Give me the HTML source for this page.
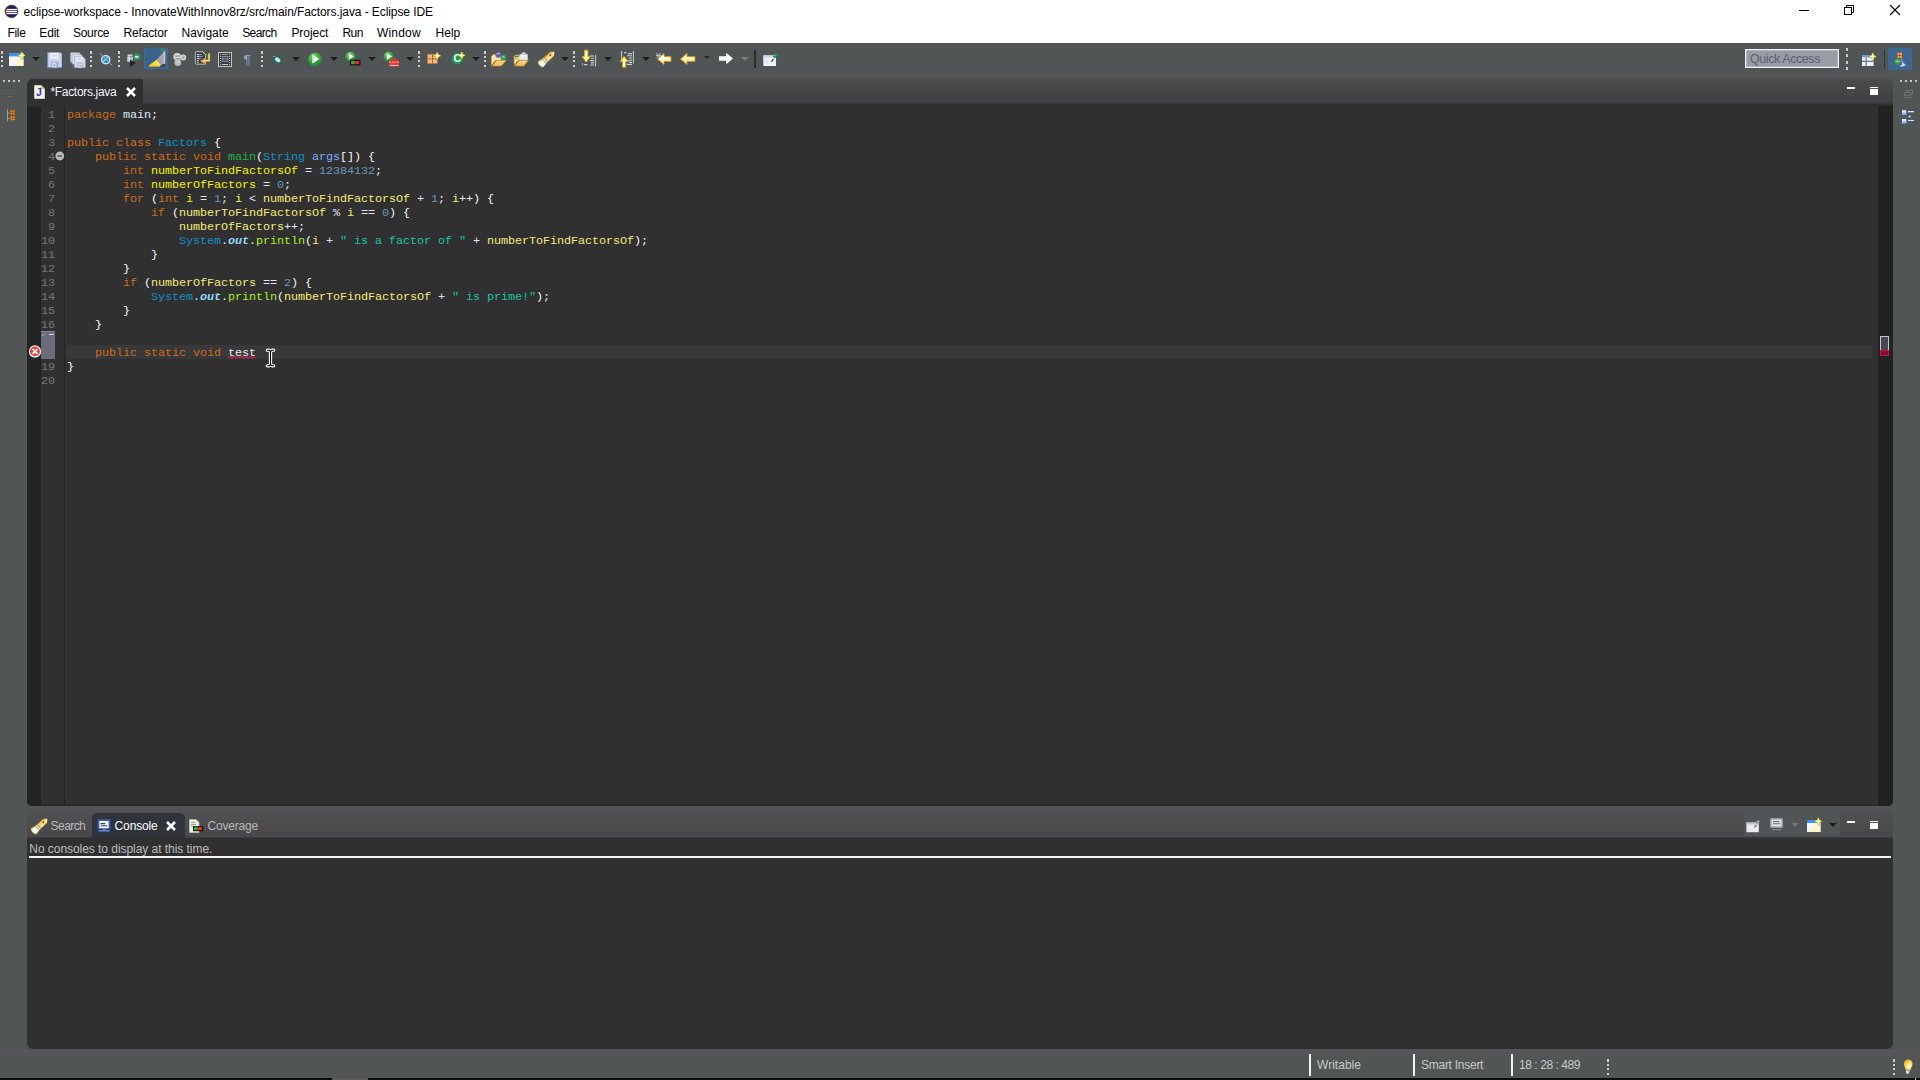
<!DOCTYPE html>
<html lang="en"><head><meta charset="utf-8"><title>eclipse-workspace - InnovateWithInnov8rz/src/main/Factors.java - Eclipse IDE</title>
<style>
html,body{margin:0;padding:0;width:1920px;height:1080px;overflow:hidden;background:#515655;font-family:"Liberation Sans",sans-serif;font-size:12px;color:#000}
div,span,svg{position:absolute;box-sizing:border-box}
.t{white-space:pre;line-height:16px;height:16px}
svg{overflow:visible}
#titlebar{left:0;top:0;width:1920px;height:43px;background:#fff}
#toolbar{left:0;top:43px;width:1920px;height:34px;background:linear-gradient(#4a4c4d 0,#555657 2px,#515556 6px,#4f5556 26px,#555557 33px,#555557 34px)}
.dd{width:0;height:0;border-left:4px solid transparent;border-right:4px solid transparent;border-top:4.5px solid #1c1c1c;margin-left:-0.5px}
.dots{width:2px;height:17px;background:linear-gradient(#cfcfcf 0,#cfcfcf 3px,transparent 3px,transparent 5px,#cfcfcf 5px,#cfcfcf 7px,transparent 7px,transparent 9.5px,#cfcfcf 9.5px,#cfcfcf 11.5px,transparent 11.5px,transparent 14px,#cfcfcf 14px,#cfcfcf 16.5px,transparent 16.5px)}
.code{font-family:"Liberation Mono",monospace;font-size:11.8px;letter-spacing:-0.08px;white-space:pre;line-height:14px;height:14px;color:#d9e8f7}
.code span{position:static}
.k{color:#cc6c1d}.c{color:#1290c3}.md{color:#1eb540}.p{color:#79abff}.vd{color:#f2f200}.v{color:#f3ec79}
.n{color:#6897bb}.s{color:#17c6a3}.sf{color:#8ddaf8;font-style:italic;font-weight:bold}.m{color:#a7ec21}.o{color:#e6e6fa}.b{color:#f9faf4}
.ln{font-family:"Liberation Mono",monospace;font-size:11.8px;letter-spacing:-0.08px;line-height:14px;height:14px;color:#767676;text-align:right;width:16px;left:39px;white-space:pre}
.u{color:#e8eef5}

</style></head><body>
<div id="titlebar">
<svg style="left:3px;top:4px" width="16" height="15" viewBox="3 4 16 15"><circle cx="10.6" cy="11.2" r="6.3" fill="#f5a13a"/><circle cx="11.7" cy="11.4" r="6.2" fill="#2a1f5c"/><rect x="6.4" y="8.9" width="10.7" height="1.3" fill="#fff"/><rect x="5.9" y="10.9" width="11.6" height="1.3" fill="#fff"/><rect x="6.4" y="12.95" width="10.7" height="1.2" fill="#fff"/><circle cx="11.7" cy="11.4" r="6.2" fill="none" stroke="#1a1436" stroke-width=".6"/></svg>
<span class="t" style="letter-spacing:-0.079px;left:23.5px;top:3.5px">eclipse-workspace - InnovateWithInnov8rz/src/main/Factors.java - Eclipse IDE</span>
<svg style="left:1799px;top:10px" width="10" height="1"><rect width="10" height="1" fill="#000"/></svg>
<svg style="left:1844px;top:5px" width="10" height="10" viewBox="0 0 10 10" fill="none" stroke="#000" stroke-width="1"><rect x="0.5" y="2.5" width="7" height="7"/><path d="M2.5 2.5V0.5H9.5V7.5H7.5"/></svg>
<svg style="left:1890px;top:5px" width="10" height="10" viewBox="0 0 10 10" stroke="#000" stroke-width="1.1"><path d="M0 0L10 10M10 0L0 10"/></svg>
<span class="t" style="letter-spacing:-0.336px;left:7.5px;top:24.5px">File</span>
<span class="t" style="letter-spacing:-0.172px;left:39.3px;top:24.5px">Edit</span>
<span class="t" style="letter-spacing:-0.305px;left:73px;top:24.5px">Source</span>
<span class="t" style="letter-spacing:-0.17px;left:123.5px;top:24.5px">Refactor</span>
<span class="t" style="letter-spacing:-0.047px;left:181.6px;top:24.5px">Navigate</span>
<span class="t" style="letter-spacing:-0.605px;left:242.2px;top:24.5px">Search</span>
<span class="t" style="letter-spacing:-0.051px;left:291.4px;top:24.5px">Project</span>
<span class="t" style="letter-spacing:-0.539px;left:342.4px;top:24.5px">Run</span>
<span class="t" style="letter-spacing:0.185px;left:377px;top:24.5px">Window</span>
<span class="t" style="letter-spacing:-0.022px;left:435.6px;top:24.5px">Help</span>
</div>

<div id="toolbar"></div>
<!-- toolbar separators (dots) -->
<div class="dots" style="left:1px;top:51px"></div>
<div class="dots" style="left:90px;top:51px"></div>
<div class="dots" style="left:118px;top:51px"></div>
<div class="dots" style="left:261px;top:51px"></div>
<div class="dots" style="left:418px;top:51px"></div>
<div class="dots" style="left:484px;top:51px"></div>
<div class="dots" style="left:573px;top:51px"></div>
<!-- dropdown arrows -->
<div class="dd" style="left:32px;top:57px"></div>
<div class="dd" style="left:292px;top:57px"></div>
<div class="dd" style="left:330px;top:57px"></div>
<div class="dd" style="left:368px;top:57px"></div>
<div class="dd" style="left:406px;top:57px"></div>
<div class="dd" style="left:472px;top:57px"></div>
<div class="dd" style="left:561px;top:57px"></div>
<div class="dd" style="left:604px;top:57px"></div>
<div class="dd" style="left:642px;top:57px"></div>
<div class="dd" style="left:704.2px;top:56.4px;border-left-width:3.3px;border-right-width:3.3px;border-top-width:3.7px;border-top-color:#262828"></div>
<div class="dd" style="left:741px;top:57px;border-top-color:#7a7c7d"></div>
<div style="left:754px;top:50px;width:2px;height:18px;background:#2b2c2d"></div>

<!-- 1 New -->
<svg style="left:8px;top:51px" width="18" height="16" viewBox="0 0 18 16">
<rect x="1" y="2" width="14.5" height="13" fill="#f4f6fb"/><rect x="1" y="2" width="12" height="3.4" fill="#3d94ea"/>
<path d="M9 9 L15.5 8 V15 H7z" fill="#fdf7b8" opacity=".8"/>
<path d="M13.70 1.10L14.65 3.55L16.93 4.50L14.65 5.45L13.70 7.90L12.75 5.45L10.47 4.50L12.75 3.55z" fill="#7d7a1c" opacity=".55" stroke="#7d7a1c" stroke-width="1.6" stroke-linejoin="round"/><path d="M13.70 1.10L14.65 3.55L16.93 4.50L14.65 5.45L13.70 7.90L12.75 5.45L10.47 4.50L12.75 3.55z" fill="#ffff9c" stroke="#fff27a" stroke-width=".5"/>
</svg>
<!-- 2 Save -->
<svg style="left:47px;top:51.6px" width="16" height="17" viewBox="0 0 16 17">
<path d="M0.6 0.6H13.4L14.8 2V15.4H0.6z" fill="#ccd3ee"/>
<path d="M0.6 0.6V15.4M0.6 15.6H14.8" stroke="#7786bd" stroke-width="1.1" fill="none" opacity=".8"/>
<rect x="3.2" y="0.8" width="8.6" height="6.2" fill="#e9edf8"/><rect x="4.6" y="3.4" width="5.8" height="1" fill="#c3cbe6"/>
<rect x="3.8" y="9.4" width="7.8" height="6" fill="#aab5dc"/><rect x="5.4" y="10.8" width="3.4" height="4.6" fill="#dfe4f4"/><rect x="6.6" y="12" width="1.4" height="2.4" fill="#8d9aca"/>
</svg>
<!-- 3 Save all -->
<svg style="left:70px;top:51.6px" width="16" height="17" viewBox="0 0 16 17">
<path d="M0.4 0.6H9L10.2 1.8V10H0.4z" fill="#d2d7e6"/>
<path d="M2.2 2.4H10.8L12.4 4V12H2.2z" fill="#dde1ee" stroke="#a9b0c6" stroke-width=".7"/>
<path d="M4.4 4.4H12.6L15.2 7V15.6H4.4z" fill="#d6dbea" stroke="#a9b0c6" stroke-width=".7"/>
<path d="M0.4 10L4.4 15.6" stroke="#7c85a4" stroke-width=".8"/>
<rect x="6.6" y="5.2" width="6" height="3.4" fill="#eef0f7"/><rect x="7.6" y="6.4" width="4" height=".9" fill="#bcc3d8"/>
<rect x="7.2" y="10.6" width="6" height="5" fill="#b3bbd6"/><rect x="8.6" y="11.8" width="2.8" height="3.8" fill="#e3e7f2"/><rect x="9.5" y="12.8" width="1.1" height="2" fill="#8b94b5"/>
</svg>
<!-- 4 skip breakpoints -->
<svg style="left:99px;top:52px" width="15" height="15" viewBox="0 0 15 15">
<circle cx="6.7" cy="7.7" r="4.1" fill="#2a8cc6" stroke="#e6eef6" stroke-width="1.3"/>
<path d="M4.2 9.8L8.8 5.2" stroke="#9fe0ea" stroke-width="1.6" opacity=".8"/>
<path d="M1 1.2L13 13.2" stroke="#d6dde6" stroke-width="1"/><path d="M1.4 1L13.4 13" stroke="#2e3640" stroke-width=".5"/>
</svg>
<!-- 5 run last tool -->
<svg style="left:125px;top:52px" width="17" height="16" viewBox="0 0 17 16">
<rect x="2.5" y="2.5" width="5" height="1.4" fill="#d9dcd9"/><rect x="2" y="4.6" width="6" height="5" fill="#b9bdb9"/><rect x="3.5" y="3.5" width="1.2" height="6" fill="#e8e8e8"/>
<circle cx="11.8" cy="4.8" r="3.5" fill="#1f9a69"/><path d="M10 3.9h3.4v1.8H10z" fill="#eef6f1"/>
<path d="M5 7.5L11 11L5 15z" fill="#222426"/>
</svg>
<!-- 6 mark occurrences (toggled) -->
<div style="left:144px;top:48px;width:24px;height:21px;background:#3c638c;border:1px solid #3a69a4;border-top-color:#3c638c"></div>
<svg style="left:144px;top:48px" width="24" height="21" viewBox="144 48 24 21">
<path d="M160.3 48.8H165.2V50.6L161.6 54z" fill="#2f8a5e"/>
<path d="M165.2 50.4V63.6L161 65.2L156.8 59.4z" fill="#ad9fa8"/>
<path d="M163.6 52.4L165.2 50.6V63.6L163.6 64.2z" fill="#cbcbd4"/>
<path d="M161 65.2L165.2 63.6V66L160 67.2z" fill="#22303f" opacity=".75"/>
<path d="M156.8 59.4L161 65.2L159.4 66.5H148.8V65.4z" fill="#f6d733"/>
<path d="M156.6 60.6L159.6 64.8L157 65.6z" fill="#ffef7a"/>
<path d="M149 66.2H159.6" stroke="#d9b112" stroke-width=".8"/>
</svg>
<!-- 7 gray gears -->
<svg style="left:172px;top:52px" width="16" height="15" viewBox="0 0 16 15">
<circle cx="5.2" cy="4.8" r="3.8" fill="#dcdcdc"/><circle cx="11.2" cy="5.6" r="3" fill="#d2d2d2"/><circle cx="5.8" cy="10.6" r="3.4" fill="#bdbdbd"/>
<rect x="3" y="3.4" width="5" height="1.2" fill="#8f8f8f"/><rect x="3.2" y="6" width="5" height="1.2" fill="#9a9a9a"/><circle cx="11.4" cy="5.6" r="1.1" fill="#8b8b8b"/>
<rect x="3.4" y="9.4" width="4.6" height="1" fill="#dadada"/>
</svg>
<!-- 8 doc with arrow -->
<svg style="left:194px;top:50px" width="17" height="16" viewBox="194 50 17 16">
<path d="M196.2 51.6H202.4L205.6 54.6V64.2H196.2Q195.4 64.2 195.4 63.4V52.4Q195.4 51.6 196.2 51.6z" fill="#3f424d" stroke="#c9c8aa" stroke-width=".9"/>
<path d="M202.4 51.6L205.6 54.6" stroke="#d8d6a0" stroke-width="1"/>
<path d="M197 54.6h2.2M197 56.6h2.2M197 58.6h2M197 60.6h1.6M197 62.6h1.6" stroke="#f0f2f8" stroke-width=".9"/>
<path d="M199.2 54.6h2.6M199.2 56.6h3.4M199 58.6h2" stroke="#8f9cd0" stroke-width=".9"/>
<path d="M209 53.4V60.6H204" fill="none" stroke="#c9b04a" stroke-width="2.4" opacity=".55"/>
<path d="M209 53.4V60.6H204" fill="none" stroke="#fbe96a" stroke-width="1.3"/>
<path d="M205.6 57.8L200 61L205.6 64.2z" fill="#f39a2e"/><path d="M204.8 59.6L202 61L204.8 62.4z" fill="#fbd09a"/>
</svg>
<!-- 9 block selection -->
<svg style="left:217px;top:51px" width="16" height="17" viewBox="217 51 16 17">
<rect x="218.5" y="52.5" width="13" height="14" fill="#3b3e43" stroke="#c9c5b0" stroke-width="1"/>
<path d="M220.5 54v11.4M229.5 54v11.4" stroke="#b9bcc0" stroke-width="1" stroke-dasharray="1 1"/>
<path d="M222 54.5h6" stroke="#8e99a4" stroke-width="1"/>
<rect x="222.3" y="56.6" width="5.4" height="4.6" fill="none" stroke="#8f9ba6" stroke-width=".9"/><path d="M222.3 58.9h5.4" stroke="#8f9ba6" stroke-width=".9"/>
<path d="M222 64.5h6" stroke="#c4c6c8" stroke-width="1"/>
</svg>
<!-- 10 pilcrow -->
<div style="left:243px;top:48px;width:10px;height:8px;background:linear-gradient(#4b5660,#4f5a66);opacity:.35"></div>
<svg style="left:242px;top:54px" width="12" height="13" viewBox="0 0 12 13"><text x="1.6" y="10.4" font-family="Liberation Sans, sans-serif" font-size="13.5" fill="#8ea7c8">¶</text></svg>
<!-- 11 debug bug -->
<svg style="left:270px;top:52.4px" width="15" height="15" viewBox="0 0 15 15">
<path d="M3.2 2.4L5 4.6M1.4 6.6L3.8 7.2M2.4 11.4L4.8 9.8M12.6 12L10.6 10M13.6 8.2L11.2 8M10.4 3.8L9 5" stroke="#234e55" stroke-width="1"/>
<ellipse cx="7.4" cy="7.6" rx="4.7" ry="3.5" transform="rotate(34 7.4 7.6)" fill="#1f7079"/>
<ellipse cx="7.7" cy="7.8" rx="3" ry="2" transform="rotate(34 7.7 7.8)" fill="#d4eadc"/>
<ellipse cx="8.2" cy="8.3" rx="1.5" ry=".9" transform="rotate(34 8.2 8.3)" fill="#e9e3a4"/>
<circle cx="4.2" cy="4.9" r="1.3" fill="#2d6a76"/><circle cx="3.9" cy="4.5" r=".5" fill="#dfeeee"/>
</svg>
<!-- 12 run -->
<svg style="left:307px;top:51px" width="16" height="16" viewBox="0 0 16 16">
<defs><radialGradient id="gr" cx=".4" cy=".3" r=".8"><stop offset="0" stop-color="#84cf6e"/><stop offset=".55" stop-color="#34a238"/><stop offset="1" stop-color="#1b7a3c"/></radialGradient></defs>
<circle cx="8" cy="8.3" r="6.9" fill="url(#gr)"/><path d="M5.5 3.6L12.2 8L5.5 12.4z" fill="#fff"/><path d="M5.5 3.6L8 8L5.5 12.4z" fill="#c8e8c0"/>
</svg>
<!-- 13 coverage -->
<svg style="left:344px;top:50px" width="17" height="17" viewBox="0 0 17 17">
<circle cx="6.6" cy="6.6" r="5.2" fill="url(#gr)"/><path d="M4.8 3.2L10 6.5L4.8 9.8z" fill="#fff"/>
<rect x="6" y="9.8" width="10.4" height="5.6" fill="#0a0a0a"/><rect x="7" y="10.9" width="3.8" height="3.4" fill="#2fae3b"/><rect x="10.8" y="10.9" width="4.6" height="3.4" fill="#e02626"/>
</svg>
<!-- 14 external tools -->
<svg style="left:382px;top:50px" width="18" height="18" viewBox="0 0 18 18">
<circle cx="6.6" cy="6.6" r="5.2" fill="url(#gr)"/><path d="M4.8 3.2L10 6.5L4.8 9.8z" fill="#fff"/>
<path d="M10 9.2h4v1h-4z" fill="none" stroke="#e8322c" stroke-width="1.1"/>
<rect x="7.2" y="10.2" width="9.8" height="6.2" rx="1" fill="#ea3a33"/><path d="M7.2 12.2H17" stroke="#fbd0cc" stroke-width=".9" stroke-dasharray="1.6 1"/>
<rect x="7.8" y="15.2" width="8.6" height=".8" fill="#fbe1df"/>
</svg>
<!-- 15 new java package -->
<svg style="left:426px;top:51px" width="16" height="15" viewBox="0 0 16 15">
<rect x="1" y="2.8" width="11" height="10.2" fill="#9a5a2a"/><rect x="1.6" y="3.4" width="4.4" height="4.1" fill="#f1b985"/><rect x="6.8" y="3.4" width="4.4" height="4.1" fill="#f1b985"/><rect x="1.6" y="8.3" width="4.4" height="4.1" fill="#f1b985"/><rect x="6.8" y="8.3" width="4.4" height="4.1" fill="#f1b985"/>
<path d="M11.30 1.40L12.25 3.85L14.53 4.80L12.25 5.75L11.30 8.20L10.35 5.75L8.07 4.80L10.35 3.85z" fill="#7d7a1c" opacity=".55" stroke="#7d7a1c" stroke-width="1.6" stroke-linejoin="round"/><path d="M11.30 1.40L12.25 3.85L14.53 4.80L12.25 5.75L11.30 8.20L10.35 5.75L8.07 4.80L10.35 3.85z" fill="#ffff9c" stroke="#fff27a" stroke-width=".5"/>
</svg>
<!-- 16 new java class -->
<svg style="left:451px;top:51px" width="15" height="15" viewBox="0 0 15 15">
<circle cx="6.4" cy="7.6" r="5.8" fill="#1c9a4f"/>
<text x="2.6" y="11.2" font-family="Liberation Sans, sans-serif" font-weight="bold" font-size="10.4" fill="#fff">C</text>
<path d="M10.70 1.00L11.65 3.45L13.93 4.40L11.65 5.35L10.70 7.80L9.75 5.35L7.47 4.40L9.75 3.45z" fill="#7d7a1c" opacity=".55" stroke="#7d7a1c" stroke-width="1.6" stroke-linejoin="round"/><path d="M10.70 1.00L11.65 3.45L13.93 4.40L11.65 5.35L10.70 7.80L9.75 5.35L7.47 4.40L9.75 3.45z" fill="#ffff9c" stroke="#fff27a" stroke-width=".5"/>
</svg>
<!-- 17 open type -->
<svg style="left:490px;top:50px" width="17" height="17" viewBox="490 50 17 17">
<path d="M491.4 66V56.2L493.6 54.6H496L497.4 56.2H504.6V61" fill="#f9e8b0" stroke="#d9a23a" stroke-width=".8"/>
<circle cx="498.2" cy="54.8" r="2.9" fill="#6f55ae"/><path d="M496.4 54.2Q498.2 52.4 500 54.2" stroke="#c0b0e6" stroke-width="1.1" fill="none"/>
<circle cx="503.4" cy="57.4" r="2.9" fill="#2f9450"/><path d="M501.6 57.4L503.4 55.4L505.2 57.4z" fill="#a8dcae"/>
<path d="M491.4 66L495.8 60.4H506.2L501.4 66z" fill="#fac46c" stroke="#c9861c" stroke-width=".8"/>
<path d="M491.6 65.8L495.8 60.6" stroke="#6b3f0a" stroke-width=".9"/>
<path d="M496.4 61.4H504.4" stroke="#fde2a6" stroke-width=".9"/>
</svg>
<!-- 18 open task -->
<svg style="left:513px;top:51px" width="16" height="16" viewBox="513 51 16 16">
<path d="M514.2 66V56.4L515.4 55.2H519.2L520.4 56.4H527V61" fill="#f9e8b0" stroke="#d9a23a" stroke-width=".8"/>
<rect x="515" y="56.6" width="3.6" height="3" fill="#b8d45e"/><rect x="515" y="56.2" width="3.6" height=".8" fill="#5a4a1a"/>
<rect x="520" y="54.2" width="7.6" height="5.8" fill="#f6f8fc" stroke="#b8bcc8" stroke-width=".6"/><rect x="521.2" y="56.4" width="5.2" height="2.2" fill="#dfe6f4"/>
<path d="M522.2 54V52.8H525.2V54" fill="#cfd2d8" stroke="#cfd2d8" stroke-width=".8"/>
<path d="M514.2 66L518.4 60.4H528.4L523.8 66z" fill="#fac46c" stroke="#c9861c" stroke-width=".8"/>
<path d="M514.4 65.8L518.4 60.6" stroke="#6b3f0a" stroke-width=".9"/>
<path d="M519 61.4H526.8" stroke="#fde2a6" stroke-width=".9"/>
</svg>
<!-- 19 search flashlight -->
<svg style="left:536.8px;top:49.7px" width="18" height="18" viewBox="0 0 18 18">
<g transform="translate(3.6,14.4) rotate(-42.6)">
<path d="M0 -3.7Q-2.6 0 0 3.7L4.6 2.9V-2.9z" fill="#fffdf0" stroke="#f0cf6a" stroke-width=".7"/>
<path d="M0.2 -3.4L4.4 -2.7" stroke="#c98a1e" stroke-width=".9"/>
<rect x="4.6" y="-2.9" width="3.2" height="5.8" fill="#b9b6a4"/><rect x="5.6" y="-2.9" width="1" height="5.8" fill="#e4e2d6"/>
<path d="M7.8 -2.9H15.4L18.2 -0.7V0.7L15.4 2.9H7.8z" fill="#f8d25e"/>
<path d="M7.8 -2.7H15.4L18 -0.7" fill="none" stroke="#a8660e" stroke-width=".9"/>
<path d="M7.8 1.2H16.8" stroke="#fbe7a2" stroke-width="1.4"/>
<circle cx="13.4" cy="-0.2" r=".9" fill="#4a3560"/>
<circle cx="17.2" cy="0" r=".85" fill="#f7e9e4"/>
</g>
</svg>
<!-- 20 next annotation -->
<svg style="left:581px;top:50px" width="16" height="17" viewBox="0 0 16 17">
<path d="M14.6 5v11.4" stroke="#c9cdd6" stroke-width="1"/><path d="M9 6h4M10 8.3h3M9 10.6h4M10 12.9h3M3 14.6h3.4M9 15h4" stroke="#c9cdd6" stroke-width="1.1"/>
<path d="M1.4 13v3" stroke="#8f8fd8" stroke-width="1"/>
<path d="M3.5 0.2H6.9V6.6H9.4L5.2 12.2L1 6.6H3.5z" fill="#fff7a8" stroke="#d4a80a" stroke-width="1"/>
<path d="M4.6 1.6h1.2v6H4.6z" fill="#fff"/>
</svg>
<!-- 21 prev annotation -->
<svg style="left:619px;top:50px" width="16" height="18" viewBox="0 0 16 18">
<path d="M2.6 1v8M14.4 1v12.6" stroke="#c9cdd6" stroke-width="1"/><path d="M5 2.6h2.4M9 3.6h4M8 5.8h5M10 8h3M9 10.2h4M10 12.4h3M7.6 14.4h5.4" stroke="#c9cdd6" stroke-width="1.1"/>
<path d="M3.5 17.2H6.7V11.6H9.2L5.1 6.4L1 11.6H3.5z" fill="#fff7a8" stroke="#d4a80a" stroke-width="1"/>
<path d="M4.5 10.8h1.2v5.6H4.5z" fill="#fff"/>
</svg>
<!-- 22 last edit location -->
<svg style="left:655px;top:52px" width="17" height="14" viewBox="0 0 17 14">
<path d="M1.5 1.2L5.5 5.6M5.2 1L2 5.8M0.8 3.6H6" stroke="#c4c8e8" stroke-width="1"/>
<path d="M16 4.6H9V1.4L2.4 7L9 12.6V9.4H16z" fill="#fff3c4" stroke="#c9961a" stroke-width="1"/>
<path d="M15 5.6H8.4V3.6L4.4 7H15z" fill="#fff"/>
</svg>
<!-- 23 back -->
<svg style="left:679px;top:52px" width="17" height="14" viewBox="0 0 17 14">
<path d="M16 4.6H8V1.4L1.4 7L8 12.6V9.4H16z" fill="#ffe9a0" stroke="#c9961a" stroke-width="1"/>
<path d="M15 5.6H7.4V3.6L3.4 7H15z" fill="#fffbe6"/>
</svg>
<!-- 24 forward (disabled/white) -->
<svg style="left:718px;top:52px" width="16" height="13" viewBox="0 0 16 13">
<path d="M1 4.2H8.2V0.8L15 6.5L8.2 12.2V8.8H1z" fill="#fdfdfd"/>
</svg>
<!-- 25 pin editor -->
<svg style="left:762px;top:52px" width="17" height="16" viewBox="0 0 17 16">
<rect x="1.4" y="3.4" width="12.6" height="10.6" fill="#f3f5fb"/><rect x="1.4" y="3.4" width="12.6" height="2.2" fill="#c9d6ee"/><rect x="1.4" y="5.4" width="5" height="6" fill="#dfe6f6" opacity=".7"/>
<path d="M9.4 9.6L11.4 7" stroke="#2b2b2b" stroke-width="1.2"/>
<path d="M10.6 4.6L13.6 1.4L15.8 3.4L12.6 6.6z" fill="#1f9a3e"/><path d="M12.2 2.4l1.6 1.6" stroke="#7fd889" stroke-width=".9"/>
</svg>

<!-- right side: quick access + perspectives -->
<div style="left:1745px;top:49px;width:94px;height:19px;background:#989ca4;border:1px solid #f2f2f2;box-shadow:inset 0 0 0 .5px #c9cbd0"></div>
<span class="t" style="letter-spacing:-0.419px;left:1750px;top:50.5px;color:#5c6170;font-size:12.5px">Quick Access</span>
<div class="dots" style="left:1845.7px;top:48px;height:22px;background:linear-gradient(#c9c9c9 0,#c9c9c9 2.6px,transparent 2.6px,transparent 6.3px,#c9c9c9 6.3px,#c9c9c9 9px,transparent 9px,transparent 13px,#c9c9c9 13px,#c9c9c9 16px,transparent 16px,transparent 19px,#c9c9c9 19px,#c9c9c9 22px)"></div>
<svg style="left:1861px;top:52px" width="16" height="16" viewBox="0 0 16 16">
<rect x="1" y="3" width="11.6" height="11" fill="#eef1f7"/><rect x="1" y="3" width="11.6" height="2.4" fill="#6f9fe0"/>
<path d="M5.2 5.4V14M1 9.4H12.6" stroke="#6b7280" stroke-width="1.2"/>
<path d="M11.80 1.10L12.75 3.55L15.03 4.50L12.75 5.45L11.80 7.90L10.85 5.45L8.57 4.50L10.85 3.55z" fill="#7d7a1c" opacity=".55" stroke="#7d7a1c" stroke-width="1.6" stroke-linejoin="round"/><path d="M11.80 1.10L12.75 3.55L15.03 4.50L12.75 5.45L11.80 7.90L10.85 5.45L8.57 4.50L10.85 3.55z" fill="#ffff9c" stroke="#fff27a" stroke-width=".5"/>
</svg>
<div style="left:1883.5px;top:50px;width:1.5px;height:19px;background:#333537"></div>
<div style="left:1888px;top:48px;width:24px;height:22px;background:#3d6690"></div>
<svg style="left:1892px;top:51px" width="16" height="17" viewBox="0 0 16 17">
<rect x="4.8" y="1" width="5.6" height="6.4" fill="#8a4a1e"/><rect x="5.4" y="1.6" width="2" height="2.4" fill="#f6a64a"/><rect x="8" y="1.6" width="2" height="2.4" fill="#f6a64a"/><rect x="5.4" y="4.6" width="2" height="2.4" fill="#f6a64a"/><rect x="8" y="4.6" width="2" height="2.4" fill="#f6a64a"/>
<circle cx="5.6" cy="10.6" r="3.1" fill="#3fa04a"/><rect x="3.6" y="9.8" width="4" height=".9" fill="#bfe6c0"/>
<path d="M9.4 6.6c0 3.6 1.6 6 4.6 7.4l-2.6 1.6H7l3-2z" fill="#cfd3ea"/><path d="M9.6 7c.2 3.4 1.6 5.4 4 6.8" stroke="#8e92c8" stroke-width=".9" fill="none"/>
</svg>

<!-- left trim -->
<div style="left:3px;top:80px;width:17px;height:2px;background:repeating-linear-gradient(90deg,#c6c8c8 0,#c6c8c8 2.2px,transparent 2.2px,transparent 4.9px)"></div>
<div style="left:0px;top:90px;width:16px;height:1.4px;background:#585d5f"></div><div style="left:0px;top:93px;width:16px;height:1.4px;background:#585d5f"></div><div style="left:7px;top:96.4px;width:6px;height:1px;background:#646a6c"></div>
<svg style="left:6px;top:108px" width="11" height="15" viewBox="0 0 11 15"><path d="M1.5 1.5v12M1.5 5h2M1.5 10.5h2" stroke="#9aa0a6" stroke-width="1" fill="none"/><rect x="4.2" y="2" width="4.8" height="4.8" fill="#7c430c"/><rect x="4.2" y="7.8" width="4.8" height="4.8" fill="#7c430c"/><g fill="#ffae3d"><rect x="4.6" y="2.4" width="1.6" height="1.6"/><rect x="7" y="2.4" width="1.6" height="1.6"/><rect x="4.6" y="4.8" width="1.6" height="1.6"/><rect x="7" y="4.8" width="1.6" height="1.6"/><rect x="4.6" y="8.2" width="1.6" height="1.6"/><rect x="7" y="8.2" width="1.6" height="1.6"/><rect x="4.6" y="10.6" width="1.6" height="1.6"/><rect x="7" y="10.6" width="1.6" height="1.6"/></g><rect x="4.2" y="2" width="4.8" height="4.8" fill="#c8721a" opacity=".45"/><rect x="4.2" y="7.8" width="4.8" height="4.8" fill="#c8721a" opacity=".45"/></svg>
<div id="edfolder" style="left:27px;top:78px;width:1866px;height:728px;border-radius:6px 6px 5px 5px;background:linear-gradient(#4e5052 0,#4a4c4e 2px,#403f41 25px,#2d2d2e 26px,#303030 28px,#303030 100%);overflow:hidden">
<div style="left:0;top:28px;width:1866px;height:700px;background:#303030"></div>
<div style="left:0;top:727px;width:1866px;height:1px;background:#262626"></div>
</div>
<div style="left:27px;top:79px;width:116px;height:28px;background:#2e2f30;border-radius:6px 0 0 0"></div>
<svg style="left:34px;top:85px" width="11" height="14" viewBox="0 0 11 14"><path d="M0.5 0.5H7.2L10.5 3.8V13.5H0.5z" fill="#f1f0fa" stroke="#d6d2a0" stroke-width="1"/><path d="M7 0.5L10.5 4H7z" fill="#c9cf55"/><text x="2.1" y="10.9" font-family="Liberation Sans, sans-serif" font-weight="bold" font-size="10.5" fill="#3a3aa8">J</text></svg>
<span class="t" style="letter-spacing:-0.325px;left:50.5px;top:83.5px;color:#f4f4f4">*Factors.java</span>
<svg style="left:126px;top:87.2px" width="10" height="10" viewBox="0 0 10 10"><path d="M1 1L9 9M9 1L1 9" stroke="#fff" stroke-width="2.5"/></svg>
<div style="left:1847px;top:87px;width:8px;height:2px;background:#fff"></div>
<div style="left:1870px;top:87px;width:8px;height:8px;background:#fff"></div><div style="left:1870px;top:88px;width:8px;height:1px;background:#555"></div>
<div style="left:27px;top:107px;width:14px;height:699px;background:#222323;border-radius:0 0 0 5px"></div>
<div style="left:41px;top:107px;width:24px;height:698px;background:#303030"></div>
<div style="left:64px;top:107px;width:1px;height:698px;background:#242424"></div>
<div style="left:1878px;top:106px;width:15px;height:700px;background:#222222;border-radius:0 0 5px 0"></div>
<div style="left:1880px;top:336px;width:9px;height:15px;border:1px solid #c4c4d2;background:#4a4752"></div>
<div style="left:1880px;top:350px;width:9px;height:5.5px;border:1px solid #c8183e;background:#7a1030"></div>
<div style="left:66px;top:345px;width:1806px;height:14px;background:#383838"></div>
<div style="left:41px;top:331px;width:14px;height:28px;background:#6a6c7b"></div>
<div style="left:41px;top:331px;width:14px;height:1px;background:#85868f"></div>
<div style="left:48.5px;top:333.8px;width:5.5px;height:1.2px;background:#dcdde6"></div>
<svg style="left:42px;top:333px" width="4" height="4" viewBox="0 0 4 4"><path d="M.4 3L2.6 .8" stroke="#c4c6d2" stroke-width=".9"/></svg>
<svg style="left:28px;top:344px" width="14" height="15" viewBox="0 0 14 15"><circle cx="6.6" cy="8.4" r="6" fill="#3d7fb0" opacity=".55"/><circle cx="7" cy="7.4" r="6.1" fill="#fbeaea"/><circle cx="7" cy="7.4" r="4.9" fill="#e2443e"/><path d="M4.6 5L9.4 9.8M9.4 5L4.6 9.8" stroke="#fff" stroke-width="1.7"/></svg>
<svg style="left:55px;top:151px" width="10" height="10" viewBox="0 0 10 10"><circle cx="4.8" cy="5" r="4.4" fill="#b9bdc0"/><path d="M2.4 5H7.2" stroke="#3a3c3e" stroke-width="1.2"/></svg>
<div class="ln" style="top:108px">1</div>
<div class="code" style="left:67px;top:108px"><span class="k">package</span> main<span class="o">;</span></div>
<div class="ln" style="top:122px">2</div>
<div class="ln" style="top:136px">3</div>
<div class="code" style="left:67px;top:136px"><span class="k">public</span> <span class="k">class</span> <span class="c">Factors</span> <span class="b">{</span></div>
<div class="ln" style="top:150px">4</div>
<div class="code" style="left:67px;top:150px">    <span class="k">public</span> <span class="k">static</span> <span class="k">void</span> <span class="md">main</span><span class="b">(</span><span class="c">String</span> <span class="p">args</span><span class="b">[])</span> <span class="b">{</span></div>
<div class="ln" style="top:164px">5</div>
<div class="code" style="left:67px;top:164px">        <span class="k">int</span> <span class="vd">numberToFindFactorsOf</span> <span class="o">=</span> <span class="n">12384132</span><span class="o">;</span></div>
<div class="ln" style="top:178px">6</div>
<div class="code" style="left:67px;top:178px">        <span class="k">int</span> <span class="vd">numberOfFactors</span> <span class="o">=</span> <span class="n">0</span><span class="o">;</span></div>
<div class="ln" style="top:192px">7</div>
<div class="code" style="left:67px;top:192px">        <span class="k">for</span> <span class="b">(</span><span class="k">int</span> <span class="vd">i</span> <span class="o">=</span> <span class="n">1</span><span class="o">;</span> <span class="v">i</span> <span class="o">&lt;</span> <span class="v">numberToFindFactorsOf</span> <span class="o">+</span> <span class="n">1</span><span class="o">;</span> <span class="v">i</span><span class="o">++</span><span class="b">)</span> <span class="b">{</span></div>
<div class="ln" style="top:206px">8</div>
<div class="code" style="left:67px;top:206px">            <span class="k">if</span> <span class="b">(</span><span class="v">numberToFindFactorsOf</span> <span class="o">%</span> <span class="v">i</span> <span class="o">==</span> <span class="n">0</span><span class="b">)</span> <span class="b">{</span></div>
<div class="ln" style="top:220px">9</div>
<div class="code" style="left:67px;top:220px">                <span class="v">numberOfFactors</span><span class="o">++;</span></div>
<div class="ln" style="top:234px">10</div>
<div class="code" style="left:67px;top:234px">                <span class="c">System</span><span class="o">.</span><span class="sf">out</span><span class="o">.</span><span class="m">println</span><span class="b">(</span><span class="v">i</span> <span class="o">+</span> <span class="s">" is a factor of "</span> <span class="o">+</span> <span class="v">numberToFindFactorsOf</span><span class="b">)</span><span class="o">;</span></div>
<div class="ln" style="top:248px">11</div>
<div class="code" style="left:67px;top:248px">            <span class="b">}</span></div>
<div class="ln" style="top:262px">12</div>
<div class="code" style="left:67px;top:262px">        <span class="b">}</span></div>
<div class="ln" style="top:276px">13</div>
<div class="code" style="left:67px;top:276px">        <span class="k">if</span> <span class="b">(</span><span class="v">numberOfFactors</span> <span class="o">==</span> <span class="n">2</span><span class="b">)</span> <span class="b">{</span></div>
<div class="ln" style="top:290px">14</div>
<div class="code" style="left:67px;top:290px">            <span class="c">System</span><span class="o">.</span><span class="sf">out</span><span class="o">.</span><span class="m">println</span><span class="b">(</span><span class="v">numberToFindFactorsOf</span> <span class="o">+</span> <span class="s">" is prime!"</span><span class="b">)</span><span class="o">;</span></div>
<div class="ln" style="top:304px">15</div>
<div class="code" style="left:67px;top:304px">        <span class="b">}</span></div>
<div class="ln" style="top:318px">16</div>
<div class="code" style="left:67px;top:318px">    <span class="b">}</span></div>
<div class="code" style="left:67px;top:346px">    <span class="k">public</span> <span class="k">static</span> <span class="k">void</span> <span class="u">test</span></div>
<div class="ln" style="top:360px">19</div>
<div class="code" style="left:67px;top:360px"><span class="b">}</span></div>
<div class="ln" style="top:374px">20</div>
<svg style="left:227.8px;top:356.2px" width="28" height="3" viewBox="0 0 28 3"><path d="M0 2.5L2 .7L4 2.5L6 .7L8 2.5L10 .7L12 2.5L14 .7L16 2.5L18 .7L20 2.5L22 .7L24 2.5L26 .7L27.4 2" fill="none" stroke="#b62a4e" stroke-width="1.1"/><path d="M1 .7H27" stroke="#b62a4e" stroke-width=".7" opacity=".7"/></svg>
<svg style="left:265px;top:348px" width="11" height="20" viewBox="265 348 11 20"><path d="M267.3 350.2H269L270.5 351.5L272 350.2H273.7M270.5 351.5V364.5M267.3 365.8H269L270.5 364.5L272 365.8H273.7" fill="none" stroke="#fff" stroke-width="3.3" stroke-linecap="round" stroke-linejoin="round"/><path d="M267.3 350.2H269L270.5 351.5L272 350.2H273.7M270.5 351.5V364.5M267.3 365.8H269L270.5 364.5L272 365.8H273.7" fill="none" stroke="#000" stroke-width="1.1" stroke-linecap="round" stroke-linejoin="round"/></svg>
<div style="left:1900px;top:80px;width:17px;height:2px;background:repeating-linear-gradient(90deg,#c6c8c8 0,#c6c8c8 2.2px,transparent 2.2px,transparent 4.9px)"></div>
<svg style="left:1904px;top:90px" width="9" height="8" viewBox="0 0 9 8"><path d="M2.5 2.5V.5H8.5V4.5H6.5M.5 2.5H6.5V5.5H.5zM.5 7.5H8" fill="none" stroke="#6d7274" stroke-width="1"/></svg>
<svg style="left:1899px;top:108px" width="18" height="18" viewBox="0 0 18 18"><ellipse cx="7.4" cy="9" rx="7.6" ry="8.6" fill="#2f6fb8" opacity=".14"/><rect x="3" y="2.2" width="4.2" height="4.2" fill="#dfe9ff"/><rect x="3" y="4.4" width="4.2" height="2" fill="#9bbcf5"/><rect x="3" y="11" width="4.2" height="4.2" fill="#dfe9ff"/><rect x="3" y="13.2" width="4.2" height="2" fill="#9bbcf5"/><path d="M9 3.6h6M9 12.5h6" stroke="#d8e2f4" stroke-width="1.1"/><circle cx="10.6" cy="8.4" r="1" fill="#cfeaff"/></svg>

<!-- console folder -->
<div style="left:27px;top:807px;width:1866px;height:242px;border-radius:5px 5px 6px 6px;background:linear-gradient(#525456 0,#4a484a 25px,#48484a 30px,#303032 31px,#303030 33px,#303030 100%);overflow:hidden"></div>
<div style="left:91.5px;top:813px;width:93px;height:25px;background:#30343a;border-radius:5px 5px 0 0"></div>
<!-- search tab -->
<svg style="left:30px;top:817px" width="18" height="18" viewBox="0 0 18 18">
<g transform="translate(3.6,14.4) rotate(-42.6)">
<path d="M0 -3.7Q-2.6 0 0 3.7L4.6 2.9V-2.9z" fill="#fffdf0" stroke="#f0cf6a" stroke-width=".7"/>
<path d="M0.2 -3.4L4.4 -2.7" stroke="#c98a1e" stroke-width=".9"/>
<rect x="4.6" y="-2.9" width="3.2" height="5.8" fill="#b9b6a4"/><rect x="5.6" y="-2.9" width="1" height="5.8" fill="#e4e2d6"/>
<path d="M7.8 -2.9H15.4L18.2 -0.7V0.7L15.4 2.9H7.8z" fill="#f8d25e"/>
<path d="M7.8 -2.7H15.4L18 -0.7" fill="none" stroke="#a8660e" stroke-width=".9"/>
<path d="M7.8 1.2H16.8" stroke="#fbe7a2" stroke-width="1.4"/>
<circle cx="13.4" cy="-0.2" r=".9" fill="#4a3560"/>
<circle cx="17.2" cy="0" r=".85" fill="#f7e9e4"/>
</g>
</svg>
<span class="t" style="letter-spacing:-0.572px;left:50.6px;top:818px;color:#b9b9b9">Search</span>
<svg style="left:95.5px;top:817.8px" width="16" height="15" viewBox="0 0 16 15"><rect x=".6" y=".6" width="14.8" height="13.8" rx="1.2" fill="#22386f" opacity=".8"/><rect x="1.6" y="1.4" width="12.8" height="9.6" rx="1" fill="#48609c"/><rect x="3.4" y="3" width="9.2" height="7.2" fill="#f2f6ff"/><path d="M4.6 5.6h4.6M4.6 7.7h6.6" stroke="#2c3d6a" stroke-width="1.1"/><rect x="2.6" y="12.2" width="11" height="1.2" fill="#7f9cd0"/><rect x="6.6" y="11" width="3" height="1.2" fill="#5b78b4"/></svg>
<span class="t" style="letter-spacing:-0.147px;left:114.6px;top:818px;color:#fff">Console</span>
<svg style="left:166px;top:821px" width="10" height="10" viewBox="0 0 10 10"><path d="M1 1L9 9M9 1L1 9" stroke="#fff" stroke-width="2.6"/></svg>
<svg style="left:188px;top:818px" width="16" height="16" viewBox="0 0 16 16"><path d="M1.5 1.5H8L11 4.5V14.5H1.5z" fill="#f3f3ee" stroke="#b9b7a4" stroke-width="1"/><path d="M8 1.5L11 4.5H8z" fill="#e6de8a"/><path d="M3 4.4h4M3 6.4h5M3 8.4h3" stroke="#8f949e" stroke-width="1"/><rect x="5" y="8.2" width="10.2" height="5" fill="#050505"/><rect x="6" y="9.2" width="3.8" height="3" fill="#10c42a"/><rect x="9.8" y="9.2" width="4.4" height="3" fill="#ee3318"/></svg>
<span class="t" style="letter-spacing:-0.204px;left:207.6px;top:818px;color:#b9b9b9">Coverage</span>
<span class="t" style="letter-spacing:-0.049px;left:29.3px;top:841px;color:#bdbdbd">No consoles to display at this time.</span>
<div style="left:29px;top:856px;width:1862px;height:2px;background:#f4f4f4"></div>
<!-- right toolbar of console -->
<div style="left:1744px;top:812px;width:96px;height:24px;background:#525556"></div>
<svg style="left:1745px;top:818px" width="16" height="16" viewBox="0 0 16 16"><rect x="1.4" y="4.6" width="12.4" height="9.6" fill="#e9ebef"/><rect x="1.4" y="4.6" width="12.4" height="2" fill="#c4c8d2"/><path d="M9.4 9.4L11.4 7" stroke="#6a6a6a" stroke-width="1.2"/><path d="M10.4 4.8L13.2 1.8L15 3.6L12.2 6.4z" fill="#9a9da4"/></svg>
<svg style="left:1769px;top:817px" width="16" height="15" viewBox="0 0 16 15"><rect x="1" y="1" width="13" height="10" rx="1.4" fill="#9a9ca0"/><rect x="2.6" y="2.6" width="9.8" height="6.8" fill="#e3e5e8"/><path d="M4 4.6h6.4M4 6.8h7.4" stroke="#6f7378" stroke-width="1.1"/><rect x="3" y="12.2" width="9" height="1" fill="#8c8e92"/></svg>
<div class="dd" style="left:1791px;top:823px;border-top-color:#75777a"></div>
<svg style="left:1806px;top:817px" width="18" height="16" viewBox="0 0 18 16">
<rect x="1" y="3" width="13.5" height="12" fill="#f4f6fb"/><rect x="1" y="3" width="11" height="3" fill="#3d94ea"/>
<path d="M8 9L14.5 8V15H3z" fill="#fdf7b8" opacity=".8"/>
<path d="M12.30 0.90L13.25 3.35L15.53 4.30L13.25 5.25L12.30 7.70L11.35 5.25L9.07 4.30L11.35 3.35z" fill="#7d7a1c" opacity=".55" stroke="#7d7a1c" stroke-width="1.6" stroke-linejoin="round"/><path d="M12.30 0.90L13.25 3.35L15.53 4.30L13.25 5.25L12.30 7.70L11.35 5.25L9.07 4.30L11.35 3.35z" fill="#ffff9c" stroke="#fff27a" stroke-width=".5"/></svg>
<div class="dd" style="left:1829px;top:823px"></div>
<div style="left:1847px;top:821px;width:8px;height:2px;background:#fff"></div>
<div style="left:1870px;top:821px;width:8px;height:8px;background:#fff"></div><div style="left:1870px;top:822px;width:8px;height:1px;background:#555"></div>

<!-- status bar -->
<div style="left:0;top:1049px;width:1920px;height:29px;background:linear-gradient(#555557 0,#555557 5px,#515655 9px,#515655 100%)"></div>
<div style="left:1309px;top:1054px;width:1.6px;height:22px;background:#f0f0f0"></div>
<div style="left:1413px;top:1054px;width:1.6px;height:22px;background:#f0f0f0"></div>
<div style="left:1511px;top:1054px;width:1.6px;height:22px;background:#f0f0f0"></div>
<span class="t" style="letter-spacing:0.025px;left:1317px;top:1057px;color:#c8c8c8">Writable</span>
<span class="t" style="letter-spacing:-0.263px;left:1421px;top:1057px;color:#c8c8c8">Smart Insert</span>
<span class="t" style="letter-spacing:-0.441px;left:1519px;top:1057px;color:#c8c8c8">18 : 28 : 489</span>
<div class="dots" style="left:1607px;top:1059px;height:17px"></div>
<div class="dots" style="left:1893px;top:1059px;height:17px"></div>
<svg style="left:1902px;top:1058px" width="12" height="17" viewBox="0 0 12 17"><defs><radialGradient id="bulb" cx=".62" cy=".66" r=".75"><stop offset="0" stop-color="#fffde0"/><stop offset=".45" stop-color="#ffe070"/><stop offset="1" stop-color="#e39a1c"/></radialGradient></defs><path d="M6.2 1.4C3.4 1.4 1.8 3.4 1.8 5.8C1.8 8 3 9.2 3.4 10.6V12H8.8V10.6C9.2 9.2 10.6 8 10.6 5.8C10.6 3.4 9 1.4 6.2 1.4z" fill="url(#bulb)"/><path d="M3.4 12.2H8.8" stroke="#5a4a2a" stroke-width=".7"/><path d="M3.8 12.6H8.4L6.4 15.8H4.4z" fill="#f2f2f2"/><path d="M6.6 13L8.2 12.8L6.6 15.4z" fill="#8a8a8a"/></svg>
<div style="left:0;top:1078px;width:1920px;height:2px;background:#0c0e10"></div>
<div style="left:332px;top:1078px;width:36px;height:2px;background:#5c5c5c"></div>
<div style="left:1915px;top:1077.5px;width:1px;height:2.5px;background:#b8b8b8"></div>

</body></html>
